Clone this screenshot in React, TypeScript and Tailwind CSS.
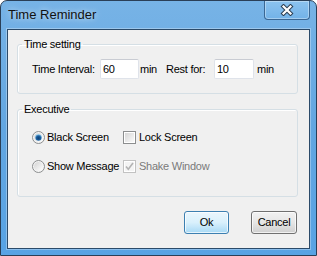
import React from "react";

const font = { fontFamily: '"Liberation Sans", Arial, sans-serif' };

function Radio({ checked }: { checked?: boolean }) {
  return (
    <svg width="13" height="13" viewBox="0 0 13 13" className="shrink-0">
      <defs>
        <linearGradient id={checked ? "rg1" : "rg0"} x1="0" y1="0" x2="1" y2="1">
          <stop offset="0" stopColor="#d4d4d4" />
          <stop offset="1" stopColor="#ffffff" />
        </linearGradient>
        <radialGradient id="dot" cx="0.5" cy="0.6" r="0.6">
          <stop offset="0" stopColor="#0b3e73" />
          <stop offset="0.55" stopColor="#1a5e9e" />
          <stop offset="1" stopColor="#8fd0f4" />
        </radialGradient>
      </defs>
      <circle cx="6.5" cy="6.5" r="6" fill="#f4f4f4" stroke="#8c8e8f" strokeWidth="1" />
      <circle cx="6.5" cy="6.5" r="4.5" fill={`url(#${checked ? "rg1" : "rg0"})`} />
      {checked && <circle cx="6.5" cy="6.5" r="3.3" fill="url(#dot)" />}
    </svg>
  );
}

function Check({ checked, disabled }: { checked?: boolean; disabled?: boolean }) {
  return (
    <svg width="13" height="13" viewBox="0 0 13 13" className="shrink-0">
      <defs>
        <linearGradient id="cg" x1="0" y1="0" x2="1" y2="1">
          <stop offset="0" stopColor="#d6d6d6" />
          <stop offset="1" stopColor="#fafafa" />
        </linearGradient>
      </defs>
      <rect x="0.5" y="0.5" width="12" height="12" fill="#ffffff" stroke={disabled ? "#c2c2c2" : "#8c8e8f"} />
      <rect x="2" y="2" width="9" height="9" fill={disabled ? "#f4f4f4" : "url(#cg)"} />
      {checked && (
        <path d="M3 6.5 L5.3 9.2 L10 3" fill="none" stroke={disabled ? "#b3b3b3" : "#333"} strokeWidth="1.6" />
      )}
    </svg>
  );
}

function TextBox({ value, w }: { value: string; w: string }) {
  return (
    <div
      className={`${w} h-[20px] bg-white border border-[#dfe3ea] border-t-[#c9ccd3] rounded-[2px] flex items-center pl-[2px] text-black`}
    >
      {value}
    </div>
  );
}

export default function App() {
  return (
    <div style={font} className="w-[317px] h-[256px] bg-white">
      <div className="w-[317px] h-[256px] border border-[#2a3f57] rounded-t-[7px] bg-gradient-to-b from-[#77b3e6] via-[#62a6e1] to-[#58a3e4] px-[6px] pb-[6px] flex flex-col">
        {/* title bar */}
        <div className="h-[28px] flex items-start shrink-0">
          <div className="pl-[1px] pt-[6px] text-[13px] leading-[16px] text-[#111] [text-shadow:0_0_6px_rgba(255,255,255,0.8)]">
            Time Reminder
          </div>
          <div className="ml-auto w-[46px] h-[19px] border border-t-0 border-[#3a6794] rounded-b-[4px] bg-gradient-to-b from-[#8cc3ef] to-[#72b2e8] shadow-[inset_0_0_0_1px_rgba(255,255,255,0.35)] flex items-center justify-center">
            <svg width="14" height="12" viewBox="0 0 14 12">
              <path d="M3.5 2.5 L10.5 9.5 M10.5 2.5 L3.5 9.5" stroke="#2c3e52" strokeWidth="4.2" strokeLinecap="square" />
              <path d="M3.5 2.5 L10.5 9.5 M10.5 2.5 L3.5 9.5" stroke="#ffffff" strokeWidth="2.2" strokeLinecap="square" />
            </svg>
          </div>
        </div>
        {/* client area */}
        <div className="flex-1 bg-[#f0f0f0] border border-[#2b4a69] shadow-[0_0_0_1px_rgba(255,255,255,0.3)] flex flex-col text-[11px] tracking-[-0.25px] text-black">
          <fieldset className="ml-[9px] mt-[7px] w-[281px] border border-[#d5dfe5] rounded-[3px] shadow-[inset_1px_1px_0_#ffffff]">
            <legend className="ml-[4px] px-[2px] leading-[14px]">Time setting</legend>
            <div className="pl-[14px] pt-[8px] pb-[14px] flex items-center">
              <span className="w-[68px]">Time Interval:</span>
              <TextBox value="60" w="w-[39px]" />
              <span className="ml-[1px] w-[26px]">min</span>
              <span className="w-[48px]">Rest for:</span>
              <TextBox value="10" w="w-[40px]" />
              <span className="ml-[3px]">min</span>
            </div>
          </fieldset>
          <fieldset className="ml-[9px] mt-[8px] w-[281px] border border-[#d5dfe5] rounded-[3px] shadow-[inset_1px_1px_0_#ffffff]">
            <legend className="ml-[4px] px-[2px] leading-[14px]">Executive</legend>
            <div className="pl-[14px] pt-[13px] pb-[22px] flex flex-col gap-[13px]">
              <div className="h-[16px] flex items-center">
                <div className="w-[91px] flex items-center gap-[2px]">
                  <Radio checked />
                  <span>Black Screen</span>
                </div>
                <div className="flex items-center gap-[3px]">
                  <Check />
                  <span>Lock Screen</span>
                </div>
              </div>
              <div className="h-[16px] flex items-center">
                <div className="w-[91px] flex items-center gap-[2px]">
                  <Radio />
                  <span>Show Message</span>
                </div>
                <div className="flex items-center gap-[3px]">
                  <Check checked disabled />
                  <span className="text-[#7a7a7a]">Shake Window</span>
                </div>
              </div>
            </div>
          </fieldset>
          <div className="mt-[14px] pr-[12px] flex justify-end gap-[22px]">
            <div className="w-[45px] h-[23px] rounded-[3px] border border-[#3c7fb1] bg-gradient-to-b from-[#eaf6fd] via-[#d9f0fc] to-[#a7d9f5] shadow-[inset_0_0_0_1px_rgba(255,255,255,0.7)] flex items-center justify-center">
              Ok
            </div>
            <div className="w-[46px] h-[23px] rounded-[3px] border border-[#707070] bg-gradient-to-b from-[#f2f2f2] via-[#e6e6e6] to-[#cfcfcf] shadow-[inset_0_0_0_1px_rgba(255,255,255,0.7)] flex items-center justify-center">
              Cancel
            </div>
          </div>
        </div>
      </div>
    </div>
  );
}
